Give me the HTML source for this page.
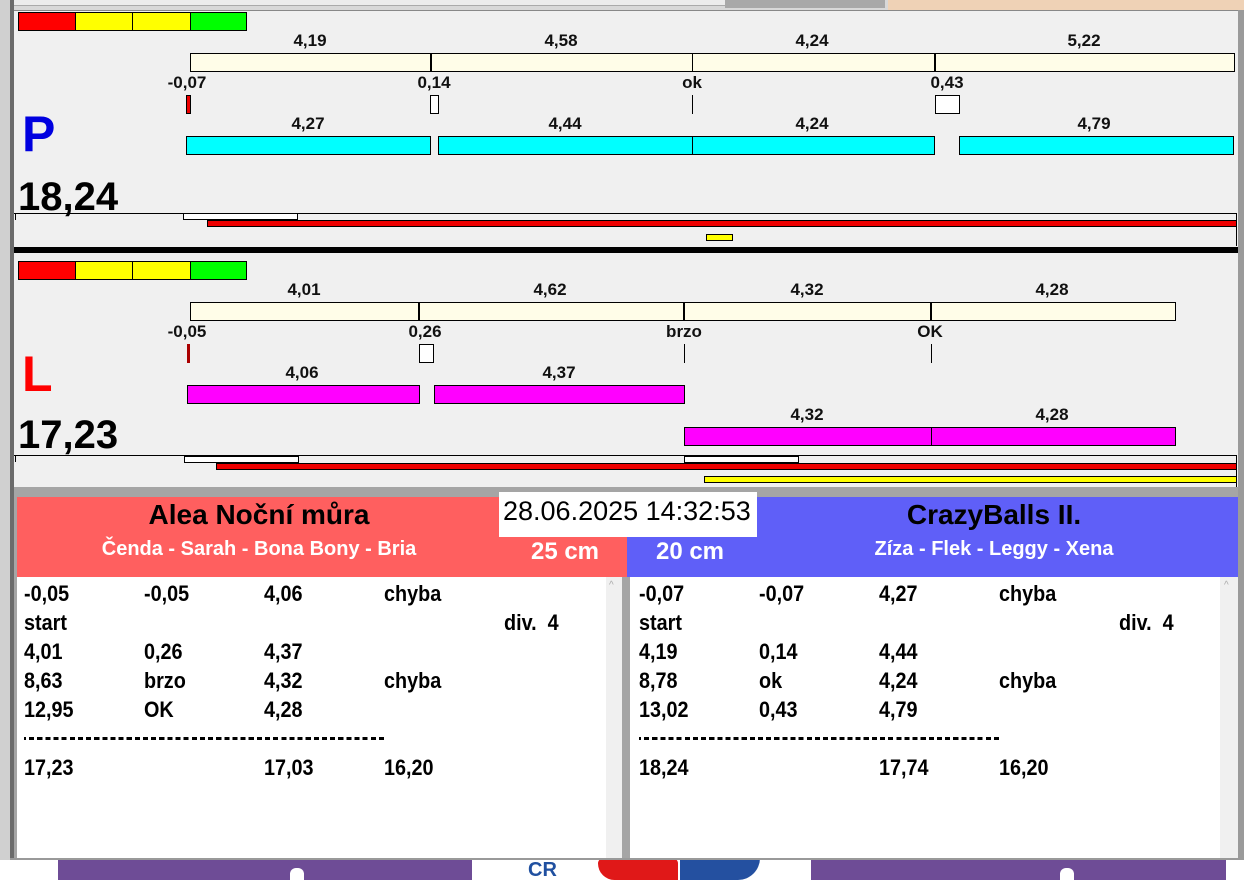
<!DOCTYPE html>
<html><head><meta charset="utf-8">
<style>
*{margin:0;padding:0;box-sizing:border-box}
body{width:1244px;height:880px;position:relative;overflow:hidden;background:#fff;font-family:"Liberation Sans",Arial,sans-serif;font-weight:bold}
.a{position:absolute}
.c{position:absolute;transform:translateX(-50%);font-size:17px;line-height:18px;color:#111;white-space:nowrap}
.cr{background:#fffde8;border:1px solid #000}
.cy{background:#00ffff;border:1px solid #000}
.mg{background:#ff00ff;border:1px solid #000}
.wb{background:#fff;border:1px solid #000}
.rd{background:#e00;border:1px solid #000}
.row{position:absolute;font-size:22px;line-height:24px;color:#000;white-space:nowrap;transform:scaleX(0.9);transform-origin:0 0}
</style></head><body>
<!-- top strip -->
<div class="a" style="left:0;top:0;width:1244px;height:12px;background:#d8d8d8"></div>
<div class="a" style="left:0;top:0;width:725px;height:6px;background:#ececec;border-bottom:1px solid #aaa"></div>
<div class="a" style="left:725px;top:0;width:160px;height:8px;background:#a8a8a8"></div>
<div class="a" style="left:888px;top:0;width:356px;height:12px;background:#efd2b6"></div>
<!-- window frame -->
<div class="a" style="left:0;top:0;width:14px;height:860px;background:#6b6b6b"></div>
<div class="a" style="left:0;top:0;width:10px;height:860px;background:#d0d0d0"></div>
<div class="a" style="left:1238px;top:10px;width:6px;height:850px;background:#9a9a9a"></div>
<div class="a" style="left:14px;top:10px;width:1224px;height:480px;background:#f0f0f0;border-top:1px solid #888"></div>

<!-- P panel -->
<div class="a" style="left:18px;top:12px;width:58px;height:19px;background:#f00;border:1px solid #000"></div>
<div class="a" style="left:75px;top:12px;width:58px;height:19px;background:#ff0;border:1px solid #000"></div>
<div class="a" style="left:132px;top:12px;width:59px;height:19px;background:#ff0;border:1px solid #000"></div>
<div class="a" style="left:190px;top:12px;width:57px;height:19px;background:#0f0;border:1px solid #000"></div>

<div class="c" style="left:310px;top:32px">4,19</div>
<div class="c" style="left:561px;top:32px">4,58</div>
<div class="c" style="left:812px;top:32px">4,24</div>
<div class="c" style="left:1084px;top:32px">5,22</div>
<div class="a cr" style="left:190px;top:53px;width:1045px;height:19px"></div>
<div class="a" style="left:430px;top:53px;width:2px;height:19px;background:#000"></div>
<div class="a" style="left:692px;top:53px;width:1px;height:19px;background:#000"></div>
<div class="a" style="left:934px;top:53px;width:2px;height:19px;background:#000"></div>

<div class="c" style="left:187px;top:74px">-0,07</div>
<div class="c" style="left:434px;top:74px">0,14</div>
<div class="c" style="left:692px;top:74px">ok</div>
<div class="c" style="left:947px;top:74px">0,43</div>
<div class="a rd" style="left:186px;top:95px;width:5px;height:19px"></div>
<div class="a wb" style="left:430px;top:95px;width:9px;height:19px"></div>
<div class="a" style="left:692px;top:95px;width:1px;height:19px;background:#000"></div>
<div class="a wb" style="left:935px;top:95px;width:25px;height:19px"></div>

<div class="c" style="left:308px;top:115px">4,27</div>
<div class="c" style="left:565px;top:115px">4,44</div>
<div class="c" style="left:812px;top:115px">4,24</div>
<div class="c" style="left:1094px;top:115px">4,79</div>
<div class="a cy" style="left:186px;top:136px;width:245px;height:19px"></div>
<div class="a cy" style="left:438px;top:136px;width:255px;height:19px"></div>
<div class="a cy" style="left:692px;top:136px;width:243px;height:19px"></div>
<div class="a cy" style="left:959px;top:136px;width:275px;height:19px"></div>

<div class="a" style="left:22px;top:106px;font-size:50px;line-height:56px;color:#0000e0">P</div>
<div class="a" style="left:18px;top:174px;font-size:40px;line-height:46px;color:#000">18,24</div>

<div class="a" style="left:14px;top:213px;width:1223px;height:1px;background:#000"></div>
<div class="a" style="left:15px;top:213px;width:1px;height:7px;background:#000"></div>
<div class="a wb" style="left:183px;top:213px;width:115px;height:7px"></div>
<div class="a rd" style="left:207px;top:220px;width:1030px;height:7px"></div>
<div class="a" style="left:1236px;top:213px;width:1px;height:33px;background:#000"></div>
<div class="a" style="left:706px;top:234px;width:27px;height:7px;background:#ff0;border:1px solid #000"></div>
<div class="a" style="left:14px;top:247px;width:1224px;height:6px;background:#000"></div>

<!-- L panel -->
<div class="a" style="left:18px;top:261px;width:58px;height:19px;background:#f00;border:1px solid #000"></div>
<div class="a" style="left:75px;top:261px;width:58px;height:19px;background:#ff0;border:1px solid #000"></div>
<div class="a" style="left:132px;top:261px;width:59px;height:19px;background:#ff0;border:1px solid #000"></div>
<div class="a" style="left:190px;top:261px;width:57px;height:19px;background:#0f0;border:1px solid #000"></div>

<div class="c" style="left:304px;top:281px">4,01</div>
<div class="c" style="left:550px;top:281px">4,62</div>
<div class="c" style="left:807px;top:281px">4,32</div>
<div class="c" style="left:1052px;top:281px">4,28</div>
<div class="a cr" style="left:190px;top:302px;width:986px;height:19px"></div>
<div class="a" style="left:418px;top:302px;width:2px;height:19px;background:#000"></div>
<div class="a" style="left:683px;top:302px;width:2px;height:19px;background:#000"></div>
<div class="a" style="left:930px;top:302px;width:2px;height:19px;background:#000"></div>

<div class="c" style="left:187px;top:323px">-0,05</div>
<div class="c" style="left:425px;top:323px">0,26</div>
<div class="c" style="left:684px;top:323px">brzo</div>
<div class="c" style="left:930px;top:323px">OK</div>
<div class="a" style="left:187px;top:344px;width:3px;height:19px;background:#a00"></div>
<div class="a wb" style="left:419px;top:344px;width:15px;height:19px"></div>
<div class="a" style="left:684px;top:344px;width:1px;height:19px;background:#000"></div>
<div class="a" style="left:931px;top:344px;width:1px;height:19px;background:#000"></div>

<div class="c" style="left:302px;top:364px">4,06</div>
<div class="c" style="left:559px;top:364px">4,37</div>
<div class="a mg" style="left:187px;top:385px;width:233px;height:19px"></div>
<div class="a mg" style="left:434px;top:385px;width:251px;height:19px"></div>
<div class="c" style="left:807px;top:406px">4,32</div>
<div class="c" style="left:1052px;top:406px">4,28</div>
<div class="a mg" style="left:684px;top:427px;width:248px;height:19px"></div>
<div class="a mg" style="left:931px;top:427px;width:245px;height:19px"></div>

<div class="a" style="left:22px;top:346px;font-size:50px;line-height:56px;color:#f00">L</div>
<div class="a" style="left:18px;top:412px;font-size:40px;line-height:46px;color:#000">17,23</div>

<div class="a" style="left:14px;top:455px;width:1223px;height:1px;background:#000"></div>
<div class="a" style="left:15px;top:455px;width:1px;height:7px;background:#000"></div>
<div class="a wb" style="left:184px;top:456px;width:115px;height:7px"></div>
<div class="a wb" style="left:684px;top:456px;width:115px;height:7px"></div>
<div class="a rd" style="left:216px;top:463px;width:1021px;height:7px"></div>
<div class="a" style="left:704px;top:476px;width:533px;height:7px;background:#ff0;border:1px solid #000"></div>
<div class="a" style="left:1236px;top:455px;width:1px;height:32px;background:#000"></div>

<!-- bottom section -->
<div class="a" style="left:14px;top:487px;width:1224px;height:373px;background:#a5a5a5"></div>
<div class="a" style="left:17px;top:497px;width:610px;height:80px;background:#ff5f5f"></div>
<div class="a" style="left:627px;top:497px;width:611px;height:80px;background:#5f5ff8"></div>
<div class="a" style="left:259px;top:499px;transform:translateX(-50%);font-size:28px;line-height:32px;color:#000;white-space:nowrap">Alea Noční můra</div>
<div class="a" style="left:259px;top:537px;transform:translateX(-50%);font-size:20px;line-height:24px;color:#fff;white-space:nowrap">Čenda - Sarah - Bona Bony - Bria</div>
<div class="a" style="left:565px;top:538px;transform:translateX(-50%);font-size:24px;line-height:28px;color:#fff">25 cm</div>
<div class="a" style="left:690px;top:538px;transform:translateX(-50%);font-size:24px;line-height:28px;color:#fff">20 cm</div>
<div class="a" style="left:994px;top:499px;transform:translateX(-50%);font-size:28px;line-height:32px;color:#000;white-space:nowrap">CrazyBalls II.</div>
<div class="a" style="left:994px;top:537px;transform:translateX(-50%);font-size:20px;line-height:24px;color:#fff;white-space:nowrap">Zíza - Flek - Leggy - Xena</div>
<div class="a" style="left:499px;top:492px;width:258px;height:45px;background:#fff;font-weight:normal;font-size:27px;line-height:38px;padding-left:4px;color:#000;white-space:nowrap;overflow:hidden">28.06.2025 14:32:53</div>

<div class="a" style="left:17px;top:577px;width:590px;height:281px;background:#fff"></div>
<div class="a" style="left:606px;top:577px;width:16px;height:281px;background:#f0f0f0"></div>
<div class="a" style="left:630px;top:577px;width:591px;height:281px;background:#fff"></div>
<div class="a" style="left:1220px;top:577px;width:18px;height:281px;background:#f0f0f0"></div>
<div class="a" style="left:609px;top:580px;font-size:10px;color:#aaa;font-weight:normal">^</div>
<div class="a" style="left:1224px;top:580px;font-size:10px;color:#aaa;font-weight:normal">^</div>

<div class="row" style="left:24px;top:582px">-0,05</div><div class="row" style="left:144px;top:582px">-0,05</div><div class="row" style="left:264px;top:582px">4,06</div><div class="row" style="left:384px;top:582px">chyba</div>
<div class="row" style="left:24px;top:611px">start</div><div class="row" style="left:504px;top:611px">div.&nbsp; 4</div>
<div class="row" style="left:24px;top:640px">4,01</div><div class="row" style="left:144px;top:640px">0,26</div><div class="row" style="left:264px;top:640px">4,37</div>
<div class="row" style="left:24px;top:669px">8,63</div><div class="row" style="left:144px;top:669px">brzo</div><div class="row" style="left:264px;top:669px">4,32</div><div class="row" style="left:384px;top:669px">chyba</div>
<div class="row" style="left:24px;top:698px">12,95</div><div class="row" style="left:144px;top:698px">OK</div><div class="row" style="left:264px;top:698px">4,28</div>
<div class="a" style="left:24px;top:737px;width:361px;height:3px;border-top:3px dashed #000;border-image:repeating-linear-gradient(90deg,#000 0 5px,transparent 5px 8px) 3"></div>
<div class="row" style="left:24px;top:756px">17,23</div><div class="row" style="left:264px;top:756px">17,03</div><div class="row" style="left:384px;top:756px">16,20</div>

<div class="row" style="left:639px;top:582px">-0,07</div><div class="row" style="left:759px;top:582px">-0,07</div><div class="row" style="left:879px;top:582px">4,27</div><div class="row" style="left:999px;top:582px">chyba</div>
<div class="row" style="left:639px;top:611px">start</div><div class="row" style="left:1119px;top:611px">div.&nbsp; 4</div>
<div class="row" style="left:639px;top:640px">4,19</div><div class="row" style="left:759px;top:640px">0,14</div><div class="row" style="left:879px;top:640px">4,44</div>
<div class="row" style="left:639px;top:669px">8,78</div><div class="row" style="left:759px;top:669px">ok</div><div class="row" style="left:879px;top:669px">4,24</div><div class="row" style="left:999px;top:669px">chyba</div>
<div class="row" style="left:639px;top:698px">13,02</div><div class="row" style="left:759px;top:698px">0,43</div><div class="row" style="left:879px;top:698px">4,79</div>
<div class="a" style="left:639px;top:737px;width:361px;height:3px;border-top:3px dashed #000;border-image:repeating-linear-gradient(90deg,#000 0 5px,transparent 5px 8px) 3"></div>
<div class="row" style="left:639px;top:756px">18,24</div><div class="row" style="left:879px;top:756px">17,74</div><div class="row" style="left:999px;top:756px">16,20</div>

<!-- below window -->
<div class="a" style="left:0;top:860px;width:1244px;height:20px;background:#fff"></div>
<div class="a" style="left:58px;top:860px;width:414px;height:20px;background:#6e4c96"></div>
<div class="a" style="left:811px;top:860px;width:415px;height:20px;background:#6e4c96"></div>
<div class="a" style="left:290px;top:868px;width:14px;height:12px;background:#fff;border-radius:6px 6px 0 0"></div>
<div class="a" style="left:1060px;top:868px;width:14px;height:12px;background:#fff;border-radius:6px 6px 0 0"></div>
<div class="a" style="left:528px;top:858px;font-size:20px;color:#2050a0;line-height:24px">CR</div>
<div class="a" style="left:598px;top:858px;width:80px;height:22px;background:#e01818;border-radius:10px 10px 0 30px"></div>
<div class="a" style="left:680px;top:858px;width:80px;height:22px;background:#2450a0;border-radius:0 0 30px 0"></div>
<div class="a" style="left:10px;top:858px;width:1230px;height:2px;background:#999"></div>
</body></html>
